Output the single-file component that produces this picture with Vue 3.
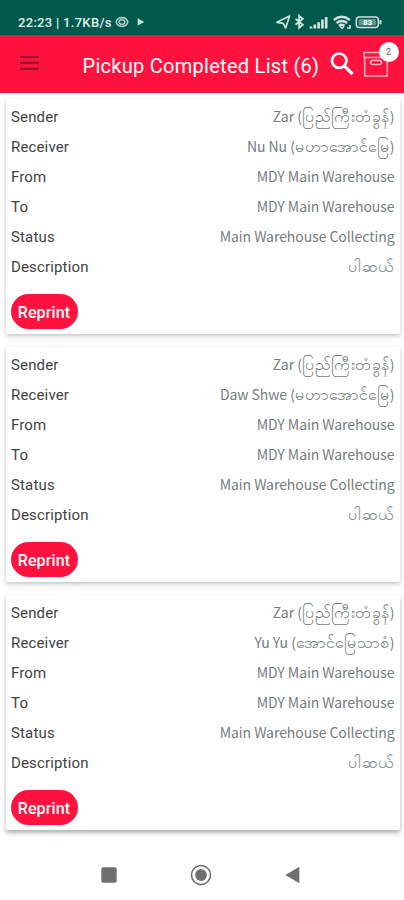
<script setup>
const make = (name, place) => [
  { label: 'Sender', value: 'Zar', place: 'ပြည်ကြီးတံခွန်' },
  { label: 'Receiver', value: name, place },
  { label: 'From', value: 'MDY Main Warehouse' },
  { label: 'To', value: 'MDY Main Warehouse' },
  { label: 'Status', value: 'Main Warehouse Collecting' },
  { label: 'Description', burmese: 'ပါဆယ်' },
]
const pickups = [
  make('Nu Nu', 'မဟာအောင်မြေ'),
  make('Daw Shwe', 'မဟာအောင်မြေ'),
  make('Yu Yu', 'အောင်မြေသာစံ'),
]
</script>

<template>
  <div class="screen">
    <header class="status">
      <span class="clock">22:23 | 1.7KB/s</span>
      <svg class="eye" width="14" height="12" viewBox="0 0 14 12" fill="none" stroke="#a9cbc5" stroke-width="1.6">
        <ellipse cx="7" cy="6" rx="5.7" ry="4.4" /><ellipse cx="7" cy="6" rx="2.8" ry="2.3" />
      </svg>
      <svg class="play" width="8" height="8" viewBox="0 0 8 8"><path d="M.7.3 7.3 4 .7 7.5z" fill="#c9ddda" /></svg>
      <svg class="indicators" width="108" height="16" viewBox="0 0 108 16" fill="none" stroke="#d0e2df">
        <path d="M2 8.3 14.5 2 10.7 14 8.2 9.3z" stroke-width="1.7" stroke-linejoin="round" />
        <path d="m20.5 4.8 7.3 6-3.7 3V1.7l3.7 3.1-7.3 6" stroke-width="1.8" />
        <path d="M36 12.5v2M39.8 10.5v4M43.6 8.2v6.3M47.4 5.6v8.9M51.2 3v11.5" stroke-width="2.7" />
        <path d="M58.8 6q8-6.3 16 0M61.5 9q5.4-4.2 10.7 0M64 11.8q2.8-2 5.5 0" stroke-width="2.4" />
        <path d="m65 12.3 2 2 2-2M72 14h3v-3" stroke-width="1.6" />
        <rect x="81.3" y="3" width="22" height="10.4" rx="3" stroke-width="1.5" />
        <path d="M105.5 6.2v4" stroke-width="2" />
        <rect x="83.5" y="5" width="17.6" height="6.4" rx="1.5" fill="#5f968d" stroke="none" />
        <text x="92.5" y="11.2" text-anchor="middle" fill="#fff" stroke="none" font-size="8" font-weight="700">83</text>
      </svg>
    </header>

    <nav class="appbar">
      <svg class="menu" width="20" height="16" viewBox="0 0 20 16"><path d="M0 2h19M0 7.9h19M0 13.8h19" stroke="#99142d" stroke-width="2.2" /></svg>
      <h1>Pickup Completed List (6)</h1>
      <svg class="search" width="26" height="26" viewBox="0 0 26 26" fill="none" stroke="#fff">
        <circle cx="9.2" cy="9.7" r="7.2" stroke-width="2.7" /><path d="m14.6 15.2 8 8" stroke-width="3.2" />
      </svg>
      <div class="box">
        <svg width="26" height="26" viewBox="0 0 26 26" fill="none" stroke="#ffb3c0" stroke-width="1.5">
          <path d="M1 1.5h24v5H1zM1.7 6.5h22.6V25H1.7z" /><rect x="7.5" y="9.5" width="11" height="4" rx="2" />
        </svg>
        <span class="badge">2</span>
      </div>
    </nav>

    <main>
      <article v-for="(rows, i) in pickups" :key="i" class="card">
        <div v-for="row in rows" :key="row.label" class="row">
          <span class="label">{{ row.label }}</span>
          <span class="value"><template v-if="row.value">{{ row.value }}</template><template v-if="row.place"> (<span class="mm">{{ row.place }}</span>)</template><span v-if="row.burmese" class="mm">{{ row.burmese }}</span></span>
        </div>
        <button>Reprint</button>
      </article>
    </main>

    <footer>
      <svg width="22" height="22" viewBox="0 0 22 22"><rect x="3.3" y="3.3" width="15.4" height="15.4" rx="2" fill="#707070" /></svg>
      <svg width="22" height="22" viewBox="0 0 22 22"><circle cx="11" cy="11" r="9.5" fill="none" stroke="#707070" stroke-width="1.6" /><circle cx="11" cy="11" r="5.9" fill="#707070" /></svg>
      <svg width="22" height="22" viewBox="0 0 22 22"><path d="M3.4 11 17.3 2.8v16.5z" fill="#707070" /></svg>
    </footer>
  </div>
</template>

<style>
body { margin: 0; background: #fefefe; }
</style>

<style scoped>
.screen { width: 404px; height: 900px; display: flex; flex-direction: column; overflow: hidden; background: #fefefe; font-family: Roboto, sans-serif; }
.status { height: 35px; flex: none; display: flex; align-items: center; padding: 9px 21px 0 18px; box-sizing: border-box; background: #00594c; color: #e2efed; }
.clock { width: 95px; font-size: 13px; font-weight: 500; white-space: nowrap; letter-spacing: .3px; }
.eye { margin-left: 2px; }
.play { margin-left: 8px; }
.indicators { margin-left: auto; }
.appbar { height: 58px; flex: none; box-sizing: border-box; display: flex; align-items: center; padding-left: 20px; background: #ff123d; color: #fff; }
.menu { margin-top: -2px; }
h1 { width: 238px; margin: 3px 0 0 42.5px; font-size: 20px; line-height: 26px; font-weight: 400; letter-spacing: .28px; white-space: nowrap; }
.search { margin: 0 0 0 9px; }
.box { position: relative; width: 26px; height: 26px; margin-left: 7px; }
.box svg { display: block; }
.badge { position: absolute; left: 16px; top: -9px; width: 20px; height: 20px; border-radius: 50%; background: #fff; color: #665b65; font-size: 9px; line-height: 20px; text-align: center; }
main { display: flex; flex-direction: column; gap: 13px; padding: 6px 4px 0 6px; }
.card { height: 235px; box-sizing: border-box; padding: 3px 5px 0; border-radius: 2px; background: #fff; box-shadow: 0 2px 4px rgba(0, 0, 0, .23); }
.card:last-child { box-shadow: 0 3px 4px rgba(0, 0, 0, .3); }
.row { height: 30px; display: flex; align-items: center; justify-content: space-between; line-height: 30px; white-space: nowrap; }
.label { color: #424242; font-size: 15px; letter-spacing: .15px; }
.value { height: 30px; margin-right: .5px; color: #767d7f; font-family: "Noto Sans CJK SC", sans-serif; font-size: 14px; line-height: 29px; letter-spacing: -.06px; }
.mm { font-size: 16.2px; line-height: 1; letter-spacing: 0; }
button { display: block; width: 67px; height: 35px; margin-top: 12px; padding: 0 1px 0 0; border: 0; border-radius: 18px; background: #ff123d; color: #fff; font: 500 16px/37px Roboto, sans-serif; letter-spacing: .15px; }
footer { height: 89px; flex: none; box-sizing: border-box; display: flex; align-items: center; justify-content: space-between; padding: 0 100px 0 98px; }
</style>
